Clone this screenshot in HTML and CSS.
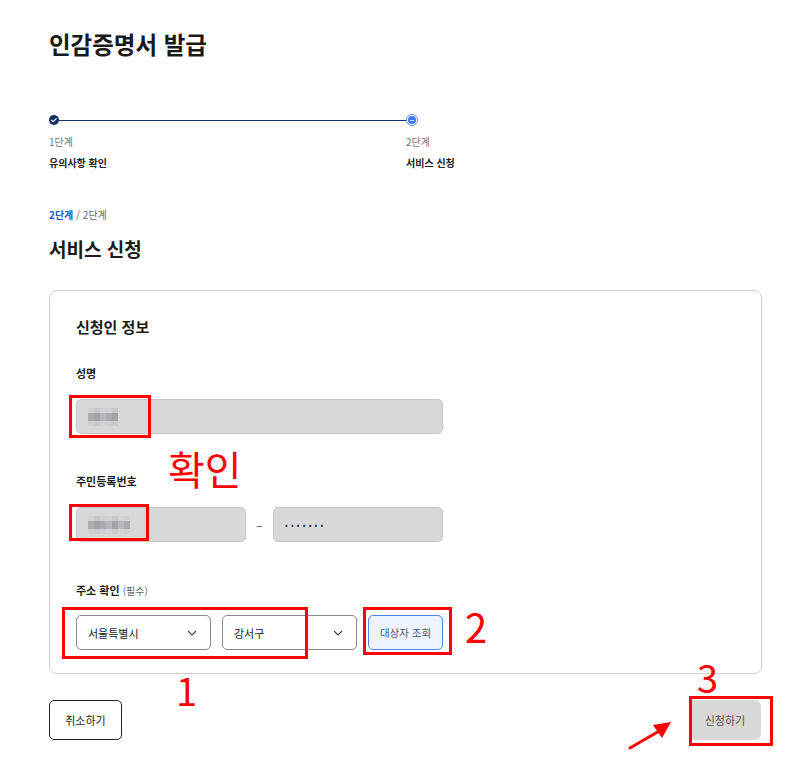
FILE: index.html
```html
<!DOCTYPE html>
<html lang="ko">
<head>
<meta charset="utf-8">
<title>인감증명서 발급</title>
<link rel="stylesheet" href="styles.css">
</head>
<body>
<div class="page">
  <h1 class="title">인감증명서 발급</h1>

  <div class="stepper">
    <div class="step step-done">
      <div class="track">
        <span class="dot dot-done">
          <svg width="10" height="10" viewBox="0 0 10 10"><polyline points="2.8,5.2 4.3,6.6 7.2,3.6" fill="none" stroke="#fff" stroke-width="1.2" stroke-linecap="round" stroke-linejoin="round"/></svg>
        </span>
        <span class="line"></span>
      </div>
      <div class="step-num">1단계</div>
      <div class="step-name">유의사항 확인</div>
    </div>
    <div class="step step-current">
      <div class="track">
        <span class="dot dot-current"><span class="dot-inner"><span class="dot-bar"></span></span></span>
      </div>
      <div class="step-num">2단계</div>
      <div class="step-name">서비스 신청</div>
    </div>
  </div>

  <div class="crumb"><span class="crumb-cur">2단계</span> / 2단계</div>
  <h2 class="section-title">서비스 신청</h2>

  <div class="card">
    <h3 class="card-title">신청인 정보</h3>

    <div class="field field-name">
      <div class="label">성명</div>
      <div class="input input-full">
        <span class="mosaic">
          <span class="c c1"></span><span class="c c2"></span><span class="c c3"></span><span class="c c1"></span><span class="c c2"></span>
        </span>
      </div>
    </div>

    <div class="field field-rrn">
      <div class="label">주민등록번호</div>
      <div class="row">
        <div class="input input-half">
          <span class="mosaic">
            <span class="c c1"></span><span class="c c2"></span><span class="c c1"></span><span class="c c3"></span><span class="c c2"></span><span class="c c3"></span><span class="c c1"></span>
          </span>
        </div>
        <span class="dash">–</span>
        <div class="input input-half"><span class="pw">•••••••</span></div>
      </div>
    </div>

    <div class="field field-addr">
      <div class="label">주소 확인 <span class="req">(필수)</span></div>
      <div class="row row-addr">
        <div class="select">
          <span>서울특별시</span>
          <svg class="chev" width="10" height="6" viewBox="0 0 10 6"><polyline points="1,1 5,5 9,1" fill="none" stroke="#444" stroke-width="1.2"/></svg>
        </div>
        <div class="select">
          <span>강서구</span>
          <svg class="chev" width="10" height="6" viewBox="0 0 10 6"><polyline points="1,1 5,5 9,1" fill="none" stroke="#444" stroke-width="1.2"/></svg>
        </div>
        <button class="btn-search">대상자 조회</button>
      </div>
    </div>
  </div>

  <div class="actions">
    <button class="btn-cancel">취소하기</button>
    <button class="btn-submit">신청하기</button>
  </div>

  <!-- annotations -->
  <div class="ann box-name"></div>
  <div class="ann box-rrn"></div>
  <div class="ann box-addr"></div>
  <div class="ann box-search"></div>
  <div class="ann box-submit"></div>
  <div class="ann-text t-confirm">확인</div>
  <div class="ann-text t-1">1</div>
  <div class="ann-text t-2">2</div>
  <div class="ann-text t-3">3</div>
  <svg class="ann-arrow" width="50" height="36" viewBox="0 0 50 36">
    <line x1="3" y1="32" x2="34" y2="14" stroke="#f00" stroke-width="3" stroke-linecap="round"/>
    <polygon points="44,6 26,9 35,22" fill="#f00"/>
  </svg>
</div>
</body>
</html>
```

FILE: styles.css
```css
* { box-sizing: border-box; }
html, body { margin: 0; padding: 0; background: #fff; }
body {
  font-family: "Noto Sans CJK KR", "Noto Sans", sans-serif;
  color: #1d1d1d;
}
.page {
  position: relative;
  width: 808px;
  height: 769px;
  padding: 28px 47px 0 49px;
}
.title {
  margin: 0;
  font-size: 23.5px;
  line-height: 32px;
  font-weight: 700;
  color: #1a1a1a;
}
.stepper {
  display: flex;
  margin-top: 54px;
}
.step-done { width: 357px; }
.track {
  display: flex;
  align-items: center;
  height: 12px;
}
.dot {
  display: flex;
  align-items: center;
  justify-content: center;
  border-radius: 50%;
  flex: none;
}
.dot-done {
  width: 10px;
  height: 10px;
  background: #0f2d63;
}
.dot svg { display: block; }
.line {
  flex: 1;
  height: 1px;
  background: #0f2d63;
}
.dot-current {
  width: 12px;
  height: 12px;
  background: #fff;
  border: 1px solid #5b8cf2;
}
.dot-inner {
  width: 8px;
  height: 8px;
  border-radius: 50%;
  background: #3d78ee;
  display: flex;
  align-items: center;
  justify-content: center;
}
.dot-bar {
  width: 4px;
  height: 1px;
  background: #c9d9ff;
}
.step-num {
  margin-top: 9px;
  font-size: 10px;
  line-height: 14px;
  color: #777;
}
.step-name {
  margin-top: 7px;
  font-size: 10px;
  line-height: 14px;
  font-weight: 700;
  color: #222;
}
.crumb {
  margin-top: 38px;
  font-size: 10px;
  line-height: 14px;
  color: #666;
}
.crumb-cur { color: #2457c5; font-weight: 700; }
.section-title {
  margin: 14px 0 0;
  font-size: 19px;
  line-height: 26px;
  font-weight: 700;
  color: #1a1a1a;
}
.card {
  margin-top: 28px;
  width: 713px;
  height: 384px;
  border: 1px solid #cfcfcf;
  border-radius: 8px;
  padding: 26px 26px 0 26px;
}
.card-title {
  margin: 0;
  font-size: 15px;
  line-height: 20px;
  font-weight: 700;
  color: #1a1a1a;
}
.field-name { margin-top: 28px; }
.field-rrn { margin-top: 39px; }
.field-addr { margin-top: 40px; }
.label {
  font-size: 11px;
  line-height: 16px;
  font-weight: 700;
  color: #1d1d1d;
}
.req { font-weight: 400; color: #666; font-size: 10px; }
.row {
  display: flex;
  align-items: center;
  margin-top: 18px;
}
.input {
  height: 35px;
  background: #d8d8d8;
  border: 1px solid #c8c8c8;
  border-radius: 5px;
  display: flex;
  align-items: center;
  padding-left: 11px;
}
.field > .input { margin-top: 18px; }
.input-full { width: 367px; }
.input-half { width: 170px; }
.dash {
  width: 27px;
  text-align: center;
  font-size: 11px;
  color: #222;
}
.pw {
  font-size: 8px;
  letter-spacing: 3.2px;
  color: #1a2a55;
}
.mosaic { display: flex; opacity: 0.9; }
.c { width: 6px; height: 18px; }
.c1 { background: linear-gradient(#d0cfd2 0 30%, #a9a7ab 30% 70%, #cfcfd1 70%); }
.c2 { background: linear-gradient(#c6c6ca 0 30%, #9f9ea4 30% 70%, #c9c8cc 70%); }
.c3 { background: linear-gradient(#d2d2d3 0 30%, #b2b4b9 30% 70%, #d3d3d4 70%); }
.row-addr { margin-top: 16px; gap: 11px; }
.select {
  width: 135px;
  height: 35px;
  border: 1px solid #8c8c8c;
  border-radius: 5px;
  background: #fff;
  display: flex;
  align-items: center;
  justify-content: space-between;
  padding: 0 13px 0 11px;
  font-size: 11px;
  color: #222;
}
.btn-search {
  width: 75px;
  height: 35px;
  border: 1px solid #4d86f0;
  border-radius: 5px;
  background: #edf4ff;
  font-family: inherit;
  font-size: 10.5px;
  color: #4a5a78;
  padding: 0;
}
.actions {
  display: flex;
  justify-content: space-between;
  width: 712px;
  margin-top: 26px;
}
.btn-cancel {
  width: 73px;
  height: 40px;
  border: 1px solid #222;
  border-radius: 5px;
  background: #fff;
  font-family: inherit;
  font-size: 11px;
  color: #222;
  padding: 0;
}
.btn-submit {
  width: 72px;
  height: 40px;
  border: none;
  border-radius: 6px;
  background: #d8d8d8;
  font-family: inherit;
  font-size: 11px;
  color: #555;
  padding: 0;
}
.ann {
  position: absolute;
  border: 3px solid #f00;
}
.box-name { left: 69px; top: 395px; width: 82px; height: 43px; }
.box-rrn { left: 69px; top: 504px; width: 80px; height: 37px; }
.box-addr { left: 62px; top: 607px; width: 246px; height: 52px; }
.box-search { left: 363px; top: 607px; width: 89px; height: 48px; }
.box-submit { left: 689px; top: 696px; width: 84px; height: 50px; }
.ann-text {
  position: absolute;
  color: #f00;
  font-family: "Noto Sans CJK KR", "Noto Sans", sans-serif;
  font-weight: 400;
  line-height: 1;
}
.t-confirm { left: 168px; top: 448px; font-size: 40px; }
.t-1 { left: 176px; top: 671px; font-size: 38px; }
.t-2 { left: 465px; top: 606px; font-size: 40px; }
.t-3 { left: 697px; top: 658px; font-size: 38px; }
.ann-arrow { position: absolute; left: 627px; top: 716px; }
```
